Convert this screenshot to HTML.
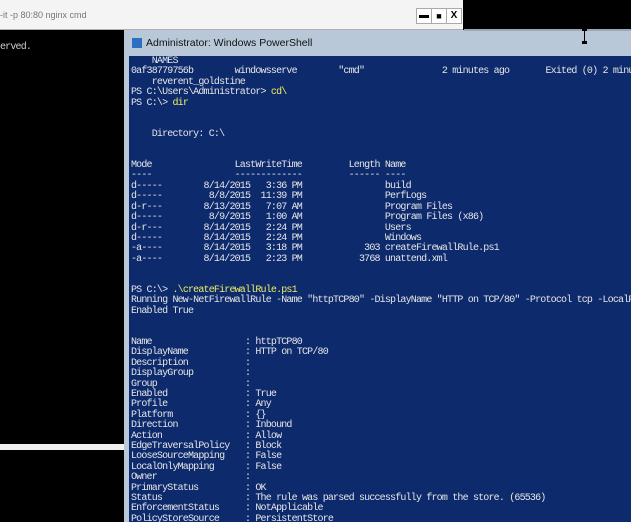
<!DOCTYPE html>
<html><head><meta charset="utf-8"><style>
html,body{margin:0;padding:0;width:631px;height:522px;overflow:hidden;background:#000;position:relative;font-family:"Liberation Sans",sans-serif}
.abs{position:absolute}
pre{margin:0;font-family:"Liberation Mono",monospace;font-size:10px;letter-spacing:-0.82px;line-height:10.4px;color:#e6e6e6;white-space:pre}
.y{color:#eeee66}
</style></head><body>
<div class="abs" style="left:0;top:0;width:463px;height:29px;background:#f4f4f4;border-bottom:1px solid #b0b0b0"></div>
<div class="abs" style="left:0;top:10px;font-size:9px;color:#777">-it -p 80:80 nginx cmd</div>
<div class="abs" style="left:416px;top:8px;width:14px;height:14px;background:#fff;border:1px solid #aaa;font-size:10px;text-align:center;line-height:14px;font-weight:bold">▬</div>
<div class="abs" style="left:431px;top:8px;width:14px;height:14px;background:#fff;border:1px solid #aaa;font-size:9px;text-align:center;line-height:14px;font-weight:bold">■</div>
<div class="abs" style="left:446px;top:8px;width:14px;height:14px;background:#fff;border:1px solid #aaa;font-size:10px;text-align:center;line-height:14px;font-weight:bold">X</div>
<pre class="abs" style="left:0;top:43px;color:#cfcfcf">erved.</pre>
<div class="abs" style="left:0;top:444px;width:124px;height:6px;background:#f0f0f0"></div>
<div class="abs" style="left:124px;top:30px;width:507px;height:492px;background:#b8c8d8"></div>
<div class="abs" style="left:464px;top:29px;width:167px;height:2px;background:#9aa8b8"></div>
<div class="abs" style="left:132px;top:38px;width:10px;height:10px;background:#2b6fc0"></div>
<div class="abs" style="left:146px;top:37px;font-size:10.5px;color:#111">Administrator: Windows PowerShell</div>
<div class="abs" style="left:584px;top:28px;width:1px;height:16px;background:#000"></div>
<div class="abs" style="left:582px;top:28px;width:5px;height:3px;background:#000"></div>
<div class="abs" style="left:582px;top:41px;width:5px;height:3px;background:#000"></div>
<div class="abs" style="left:129px;top:56px;width:502px;height:466px;background:#0d2a6c;overflow:hidden">
<pre class="abs" style="left:2px;top:1px">    NAMES
0af38779756b        windowsserve        "cmd"               2 minutes ago       Exited (0) 2 minutes ago
    reverent_goldstine
PS C:\Users\Administrator&gt; <span class="y">cd\</span>
PS C:\&gt; <span class="y">dir</span>


    Directory: C:\


Mode                LastWriteTime         Length Name
----                -------------         ------ ----
d-----        8/14/2015   3:36 PM                build
d-----         8/8/2015  11:39 PM                PerfLogs
d-r---        8/13/2015   7:07 AM                Program Files
d-----         8/9/2015   1:00 AM                Program Files (x86)
d-r---        8/14/2015   2:24 PM                Users
d-----        8/14/2015   2:24 PM                Windows
-a----        8/14/2015   3:18 PM            303 createFirewallRule.ps1
-a----        8/14/2015   2:23 PM           3768 unattend.xml


PS C:\&gt; <span class="y">.\createFirewallRule.ps1</span>
Running New-NetFirewallRule -Name "httpTCP80" -DisplayName "HTTP on TCP/80" -Protocol tcp -LocalPort 80
Enabled True


Name                  : httpTCP80
DisplayName           : HTTP on TCP/80
Description           :
DisplayGroup          :
Group                 :
Enabled               : True
Profile               : Any
Platform              : {}
Direction             : Inbound
Action                : Allow
EdgeTraversalPolicy   : Block
LooseSourceMapping    : False
LocalOnlyMapping      : False
Owner                 :
PrimaryStatus         : OK
Status                : The rule was parsed successfully from the store. (65536)
EnforcementStatus     : NotApplicable
PolicyStoreSource     : PersistentStore</pre>
</div>
</body></html>
